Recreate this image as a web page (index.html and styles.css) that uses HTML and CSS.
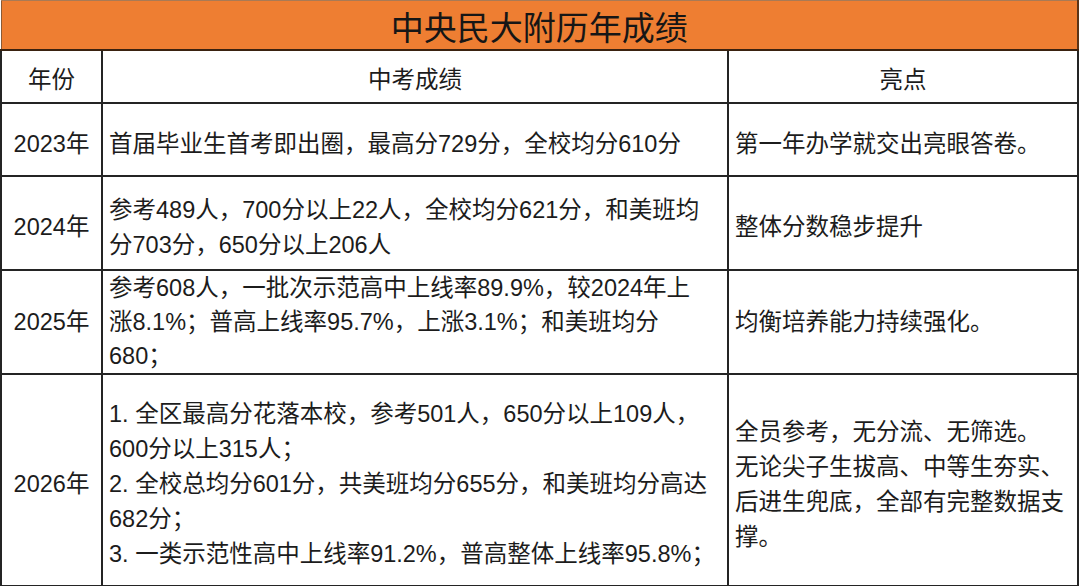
FILE: index.html
```html
<!DOCTYPE html>
<html lang="zh-CN">
<head>
<meta charset="utf-8">
<title>中央民大附历年成绩</title>
<link rel="stylesheet" href="styles.css">
</head>
<body>
<table class="scores">
  <colgroup>
    <col class="c-year">
    <col class="c-result">
    <col class="c-high">
  </colgroup>
  <thead>
    <tr class="row-title"><th colspan="3" class="title">中央民大附历年成绩</th></tr>
    <tr class="row-head"><th>年份</th><th>中考成绩</th><th>亮点</th></tr>
  </thead>
  <tbody>
    <tr class="row-2023">
      <td class="year">2023年</td>
      <td class="result">首届毕业生首考即出圈，最高分729分，全校均分610分</td>
      <td class="high">第一年办学就交出亮眼答卷。</td>
    </tr>
    <tr class="row-2024">
      <td class="year">2024年</td>
      <td class="result">参考489人，700分以上22人，全校均分621分，和美班均<br>分703分，650分以上206人</td>
      <td class="high">整体分数稳步提升</td>
    </tr>
    <tr class="row-2025">
      <td class="year">2025年</td>
      <td class="result tight">参考608人，一批次示范高中上线率89.9%，较2024年上<br>涨8.1%；普高上线率95.7%，上涨3.1%；和美班均分<br>680；</td>
      <td class="high">均衡培养能力持续强化。</td>
    </tr>
    <tr class="row-2026">
      <td class="year">2026年</td>
      <td class="result">1. 全区最高分花落本校，参考501人，650分以上109人，<br>600分以上315人；<br>2. 全校总均分601分，共美班均分655分，和美班均分高达<br>682分；<br>3. 一类示范性高中上线率91.2%，普高整体上线率95.8%；</td>
      <td class="high">全员参考，无分流、无筛选。<br>无论尖子生拔高、中等生夯实、<br>后进生兜底，全部有完整数据支<br>撑。</td>
    </tr>
  </tbody>
</table>
</body>
</html>
```

FILE: styles.css
```css
html, body {
  margin: 0;
  padding: 0;
  background: #ffffff;
}

body {
  font-family: "Liberation Sans", "Noto Sans CJK SC", sans-serif;
  color: #1c1c1c;
}

.scores {
  border-collapse: collapse;
  table-layout: fixed;
  width: 1077px;
  font-size: 23.5px;
}

.c-year { width: 101px; }
.c-result { width: 626px; }
.c-high { width: 350px; }

.scores th,
.scores td {
  border: 2px solid #242424;
  padding: 10px 6px 0 6px;
  line-height: 35px;
  font-weight: 400;
  vertical-align: middle;
  white-space: nowrap;
}

.scores .title {
  background: #ee7e32;
  border-top: 1px solid #a97a55;
  border-left: 1px solid #8a5a35;
  border-right: 2px solid #5a3418;
  border-bottom: 2px solid #3a2210;
  font-size: 33px;
  text-align: center;
  padding: 8px 0 0 0;
  line-height: 38px;
  color: #161616;
}

.row-title { height: 49px; }
.row-head { height: 53px; }
.row-2023 { height: 73px; }
.row-2024 { height: 94px; }
.row-2025 { height: 104px; }
.row-2026 { height: 212px; }

.row-head th {
  text-align: center;
  padding-top: 8px;
}

.year {
  text-align: center;
  padding-left: 2px;
  padding-right: 2px;
}

.result,
.high {
  text-align: left;
}

.scores td.tight {
  padding-top: 0;
  line-height: 34px;
}

.row-2025 td {
  padding-top: 2px;
}
```
